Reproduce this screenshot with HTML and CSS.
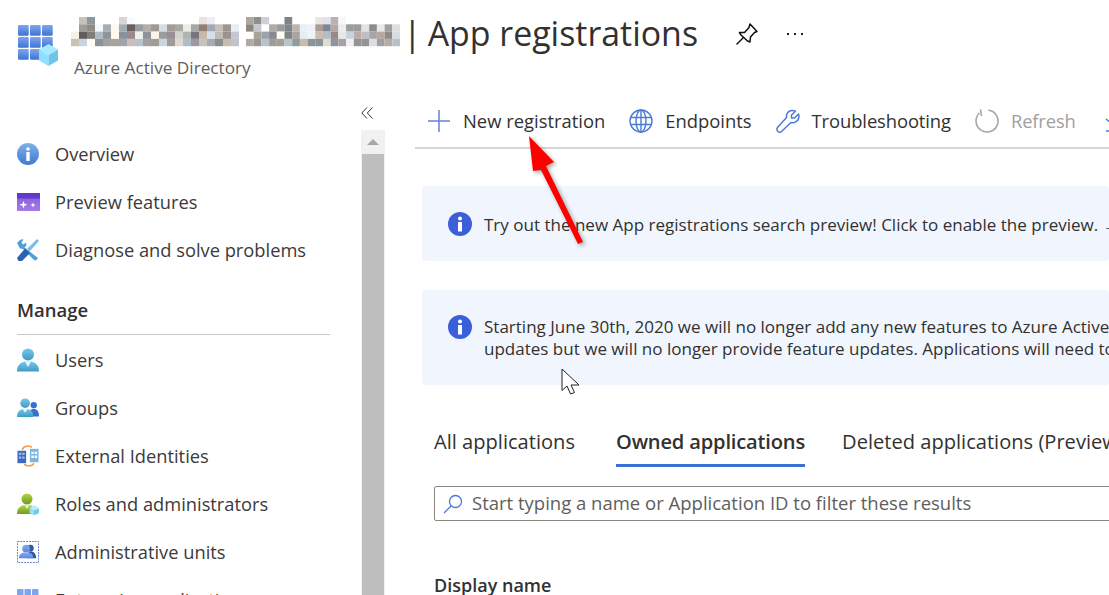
FILE: index.html
```html
<!DOCTYPE html>
<html lang="en">
<head>
<meta charset="utf-8">
<title>App registrations</title>
<link rel="stylesheet" href="styles.css">
</head>
<body>
<svg class="defs" aria-hidden="true">
  <defs>
    <linearGradient id="gridBlue" x1="0" y1="0" x2="0" y2="1"><stop offset="0" stop-color="#7ea6ef"/><stop offset="1" stop-color="#3f74d2"/></linearGradient>
    <linearGradient id="infoBlue" x1="0" y1="0" x2="0" y2="1"><stop offset="0" stop-color="#7fb2ea"/><stop offset="1" stop-color="#3f7ad2"/></linearGradient>
    <linearGradient id="userBlue" x1="0" y1="0" x2="0" y2="1"><stop offset="0" stop-color="#74c9ef"/><stop offset="1" stop-color="#3f9ac6"/></linearGradient>
    <linearGradient id="userGreen" x1="0" y1="0" x2="0" y2="1"><stop offset="0" stop-color="#b4d63c"/><stop offset="1" stop-color="#6f9a2a"/></linearGradient>
    <linearGradient id="unitBlue" x1="0" y1="0" x2="0" y2="1"><stop offset="0" stop-color="#86aaf0"/><stop offset="1" stop-color="#5a88e0"/></linearGradient>
    <linearGradient id="previewPurple" x1="0" y1="0" x2="0" y2="1"><stop offset="0" stop-color="#8458d8"/><stop offset="1" stop-color="#a67ae6"/></linearGradient>
  </defs>
</svg>
<div class="page">
  <header class="header">
    <svg class="app-logo" viewBox="0 0 42 42" width="42" height="42">
      <g fill="url(#gridBlue)">
        <rect x="0" y="0" width="10.7" height="10.7" rx="1.2"/><rect x="12" y="0" width="10.7" height="10.7" rx="1.2"/><rect x="24" y="0" width="10.7" height="10.7" rx="1.2"/>
        <rect x="0" y="12" width="10.7" height="10.7" rx="1.2"/><rect x="12" y="12" width="10.7" height="10.7" rx="1.2"/><rect x="24" y="12" width="10.7" height="10.7" rx="1.2"/>
        <rect x="0" y="24" width="10.7" height="10.7" rx="1.2"/><rect x="12" y="24" width="10.7" height="10.7" rx="1.2"/>
      </g>
      <path fill="#a9e9ff" d="M30.5 19 40 24.5 30.5 30 21 24.5z"/>
      <path fill="#8fe0ff" d="M21 24.5 30.5 30V41L21 35.500z"/>
      <path fill="#6ec6e6" d="M40 24.500V35.500L30.500 41V30z"/>
    </svg>
    <div class="title-block">
      <h1 class="title">
        <svg class="mosaic" viewBox="0 0 329 30" width="329" height="30" preserveAspectRatio="none" role="img" aria-label="Blurred tenant name">
          <g transform="scale(8 7.3)">
            <rect x="1" y="0" width="1" height="1" fill="#c9c0b6"/><rect x="2" y="0" width="1" height="1" fill="#8a979f"/><rect x="6" y="0" width="1" height="1" fill="#d8d4d4"/><rect x="7" y="0" width="1" height="1" fill="#f7fbfe"/><rect x="16" y="0" width="1" height="1" fill="#e8e3e0"/><rect x="17" y="0" width="1" height="1" fill="#eceef4"/>
            <rect x="1" y="1" width="1" height="1" fill="#a09c98"/><rect x="2" y="1" width="1" height="1" fill="#8f8d8a"/><rect x="3" y="1" width="1" height="1" fill="#f6f8fb"/><rect x="4" y="1" width="1" height="1" fill="#a6aeb1"/><rect x="5" y="1" width="1" height="1" fill="#fdf8f0"/><rect x="6" y="1" width="1" height="1" fill="#a0acb4"/><rect x="7" y="1" width="1" height="1" fill="#6b5f60"/><rect x="8" y="1" width="1" height="1" fill="#9a9da0"/><rect x="9" y="1" width="1" height="1" fill="#b6aea8"/><rect x="10" y="1" width="1" height="1" fill="#9d9b98"/><rect x="11" y="1" width="1" height="1" fill="#d5dde2"/><rect x="12" y="1" width="1" height="1" fill="#a09c98"/><rect x="13" y="1" width="1" height="1" fill="#a8a8a6"/><rect x="14" y="1" width="1" height="1" fill="#eeebe3"/><rect x="15" y="1" width="1" height="1" fill="#a8a8a6"/><rect x="16" y="1" width="1" height="1" fill="#917f76"/><rect x="17" y="1" width="1" height="1" fill="#a1aab6"/><rect x="18" y="1" width="1" height="1" fill="#c5c1b8"/><rect x="19" y="1" width="1" height="1" fill="#9a9792"/><rect x="20" y="1" width="1" height="1" fill="#e8eef2"/>
            <rect x="0" y="2" width="1" height="1" fill="#f7f0e6"/><rect x="1" y="2" width="1" height="1" fill="#5f5c5e"/><rect x="2" y="2" width="1" height="1" fill="#807c78"/><rect x="3" y="2" width="1" height="1" fill="#b0bac2"/><rect x="4" y="2" width="1" height="1" fill="#8d949a"/><rect x="5" y="2" width="1" height="1" fill="#fff9f0"/><rect x="6" y="2" width="1" height="1" fill="#8692a0"/><rect x="7" y="2" width="1" height="1" fill="#9a8a8a"/><rect x="8" y="2" width="1" height="1" fill="#eef2ec"/><rect x="9" y="2" width="1" height="1" fill="#8c949c"/><rect x="10" y="2" width="1" height="1" fill="#fdf3e6"/><rect x="11" y="2" width="1" height="1" fill="#9a9da0"/><rect x="12" y="2" width="1" height="1" fill="#9c8e96"/><rect x="13" y="2" width="1" height="1" fill="#d4d4cc"/><rect x="14" y="2" width="1" height="1" fill="#b0b4b4"/><rect x="15" y="2" width="1" height="1" fill="#767880"/><rect x="16" y="2" width="1" height="1" fill="#c8b8aa"/><rect x="17" y="2" width="1" height="1" fill="#d8dfec"/><rect x="18" y="2" width="1" height="1" fill="#c0bcb4"/><rect x="19" y="2" width="1" height="1" fill="#9a9490"/><rect x="20" y="2" width="1" height="1" fill="#c4c8d4"/>
            <rect x="0" y="3" width="1" height="1" fill="#c8c0b4"/><rect x="1" y="3" width="1" height="1" fill="#c8d4e0"/><rect x="2" y="3" width="1" height="1" fill="#fffcf6"/><rect x="3" y="3" width="1" height="1" fill="#8e9298"/><rect x="4" y="3" width="1" height="1" fill="#a4a09c"/><rect x="5" y="3" width="1" height="1" fill="#a8a4a0"/><rect x="6" y="3" width="1" height="1" fill="#a0a4a8"/><rect x="7" y="3" width="1" height="1" fill="#c8c0bc"/><rect x="8" y="3" width="1" height="1" fill="#b8c4cc"/><rect x="9" y="3" width="1" height="1" fill="#a4a09c"/><rect x="10" y="3" width="1" height="1" fill="#a09c98"/><rect x="11" y="3" width="1" height="1" fill="#ccd4dc"/><rect x="12" y="3" width="1" height="1" fill="#9c9c98"/><rect x="13" y="3" width="1" height="1" fill="#e0d8cc"/><rect x="14" y="3" width="1" height="1" fill="#b0bcc8"/><rect x="15" y="3" width="1" height="1" fill="#a098a0"/><rect x="16" y="3" width="1" height="1" fill="#c4c4b8"/><rect x="17" y="3" width="1" height="1" fill="#a8acb0"/><rect x="18" y="3" width="1" height="1" fill="#8c8c94"/><rect x="19" y="3" width="1" height="1" fill="#c8bcb0"/><rect x="20" y="3" width="1" height="1" fill="#c0c4cc"/>
          </g>
          <g transform="translate(175 0) scale(7.7 7.3)">
            <rect x="0" y="0" width="1" height="1" fill="#b0a69c"/><rect x="1" y="0" width="1" height="1" fill="#8e8e8c"/><rect x="2" y="0" width="1" height="1" fill="#ccd0d4"/><rect x="5" y="0" width="1" height="1" fill="#7e8486"/><rect x="9" y="0" width="1" height="1" fill="#ece4df"/><rect x="10" y="0" width="1" height="1" fill="#e0e2ea"/><rect x="11" y="0" width="1" height="1" fill="#bcb0b0"/><rect x="12" y="0" width="1" height="1" fill="#f6f8fc"/>
            <rect x="0" y="1" width="1" height="1" fill="#8c8680"/><rect x="1" y="1" width="1" height="1" fill="#c4c8cc"/><rect x="3" y="1" width="1" height="1" fill="#b0aaa4"/><rect x="4" y="1" width="1" height="1" fill="#9c9c9c"/><rect x="5" y="1" width="1" height="1" fill="#808484"/><rect x="6" y="1" width="1" height="1" fill="#bcb4ac"/><rect x="7" y="1" width="1" height="1" fill="#e8f0f8"/><rect x="8" y="1" width="1" height="1" fill="#eef2f6"/><rect x="9" y="1" width="1" height="1" fill="#a89c94"/><rect x="10" y="1" width="1" height="1" fill="#7e8694"/><rect x="11" y="1" width="1" height="1" fill="#b4a8a8"/><rect x="12" y="1" width="1" height="1" fill="#ecece8"/><rect x="13" y="1" width="1" height="1" fill="#9c9c9c"/><rect x="14" y="1" width="1" height="1" fill="#9c9c9c"/><rect x="15" y="1" width="1" height="1" fill="#e8e2de"/><rect x="16" y="1" width="1" height="1" fill="#8c8c90"/><rect x="17" y="1" width="1" height="1" fill="#e8e8e4"/><rect x="18" y="1" width="1" height="1" fill="#a0a0a0"/><rect x="19" y="1" width="1" height="1" fill="#dce0e4"/>
            <rect x="1" y="2" width="1" height="1" fill="#a8a49c"/><rect x="2" y="2" width="1" height="1" fill="#9aa4b0"/><rect x="3" y="2" width="1" height="1" fill="#8a8a8c"/><rect x="4" y="2" width="1" height="1" fill="#fffdf6"/><rect x="5" y="2" width="1" height="1" fill="#808484"/><rect x="6" y="2" width="1" height="1" fill="#aca49c"/><rect x="7" y="2" width="1" height="1" fill="#e4eef6"/><rect x="8" y="2" width="1" height="1" fill="#f0f4f6"/><rect x="9" y="2" width="1" height="1" fill="#cabcb0"/><rect x="10" y="2" width="1" height="1" fill="#b4bcc8"/><rect x="11" y="2" width="1" height="1" fill="#988888"/><rect x="12" y="2" width="1" height="1" fill="#e8e8e8"/><rect x="13" y="2" width="1" height="1" fill="#c8d4dc"/><rect x="14" y="2" width="1" height="1" fill="#b8b0a8"/><rect x="15" y="2" width="1" height="1" fill="#c0bcc4"/><rect x="16" y="2" width="1" height="1" fill="#a8a4ac"/><rect x="17" y="2" width="1" height="1" fill="#b8a8a0"/><rect x="18" y="2" width="1" height="1" fill="#8c8c8c"/><rect x="19" y="2" width="1" height="1" fill="#d8dce0"/>
            <rect x="0" y="3" width="1" height="1" fill="#b0aaa4"/><rect x="1" y="3" width="1" height="1" fill="#9a9894"/><rect x="2" y="3" width="1" height="1" fill="#b8c4cc"/><rect x="3" y="3" width="1" height="1" fill="#a09c98"/><rect x="4" y="3" width="1" height="1" fill="#a4a098"/><rect x="5" y="3" width="1" height="1" fill="#b8c4cc"/><rect x="6" y="3" width="1" height="1" fill="#909ca0"/><rect x="7" y="3" width="1" height="1" fill="#c8bcb0"/><rect x="8" y="3" width="1" height="1" fill="#8c9498"/><rect x="9" y="3" width="1" height="1" fill="#8c9498"/><rect x="10" y="3" width="1" height="1" fill="#e0dcd0"/><rect x="11" y="3" width="1" height="1" fill="#8c94a0"/><rect x="12" y="3" width="1" height="1" fill="#a8a0a4"/><rect x="13" y="3" width="1" height="1" fill="#f0f0f0"/><rect x="14" y="3" width="1" height="1" fill="#949494"/><rect x="15" y="3" width="1" height="1" fill="#949494"/><rect x="16" y="3" width="1" height="1" fill="#e0dcdc"/><rect x="17" y="3" width="1" height="1" fill="#9ca0a8"/><rect x="18" y="3" width="1" height="1" fill="#b8aca4"/><rect x="19" y="3" width="1" height="1" fill="#b8c0c8"/>
          </g>
        </svg>
        <span class="title-text"><span class="title-bar">|</span><span>App registrations</span></span>
      </h1>
      <p class="subtitle">Azure Active Directory</p>
    </div>
    <button class="pin" aria-label="Pin">
      <svg viewBox="0 0 22 24" width="22" height="24" fill="none" stroke="#111" stroke-width="1.5" stroke-linejoin="round">
        <path d="M14 2 21 9.500 18.500 10.500 14.500 15 14 20 11.500 19 5 13 3.500 10.500 8.500 10.500 13 5.500z"/>
        <path d="M7.500 15.500 1 22" stroke-linecap="round"/>
      </svg>
    </button>
    <div class="more" aria-label="More"><i></i><i></i><i></i></div>
  </header>

  <div class="blade">
    <aside class="sidebar">
      <div class="collapse-row">
        <svg viewBox="0 0 12 12" width="12" height="12" fill="none" stroke="#333" stroke-width="1"><path d="M6 .5 .8 6 6 11.500M11.500 .5 6.300 6 11.500 11.500"/></svg>
      </div>
      <div class="side-body">
        <nav class="menu">
          <a class="item">
            <svg class="ic" viewBox="0 0 22 22"><circle cx="11" cy="11" r="11" fill="url(#infoBlue)"/><circle cx="11" cy="6" r="1.800" fill="#fff"/><rect x="9.300" y="9" width="3.400" height="9" fill="#fff"/></svg>
            <span>Overview</span>
          </a>
          <a class="item">
            <svg class="ic ic-wide" viewBox="0 0 23 18"><rect width="23" height="18" fill="url(#previewPurple)"/><rect width="23" height="5.500" fill="#6238d0"/><path fill="#fff" d="M6.500 8 7.500 10.800 10.500 11.800 7.500 12.800 6.500 15.500 5.500 12.800 2.500 11.800 5.500 10.800zM16 9.500 16.700 11.300 18.500 12 16.700 12.700 16 14.500 15.300 12.700 13.500 12 15.300 11.300z"/></svg>
            <span>Preview features</span>
          </a>
          <a class="item">
            <svg class="ic" viewBox="0 0 22 22">
              <path d="M0 4 3 1 6.500 0 4.500 3.500 6 5.500 9.500 3.500 9 7 7.500 8.500 21 19 19 21.500 17 21 6 10 3 9.500z" fill="#4f9fdc"/>
              <path d="M20 0 22 2 12.500 12.500 10 10z" fill="#78bdea"/>
              <path d="M8 9.500 13 14 5 22 1.500 22 0 19z" fill="#2c62ad"/>
            </svg>
            <span>Diagnose and solve problems</span>
          </a>
          <div class="section">Manage</div>
          <a class="item">
            <svg class="ic ic-tall" viewBox="0 0 22 24"><circle cx="11" cy="6.500" r="6" fill="url(#userBlue)"/><path fill="url(#userBlue)" d="M0 23.500C0 17 3 15 8 13.500H14C19 15 22 17 22 23.500z"/><path fill="#eaf7fd" d="M8 13.500H14L11 19z"/></svg>
            <span>Users</span>
          </a>
          <a class="item">
            <svg class="ic" viewBox="0 0 23 20"><circle cx="17.500" cy="7" r="3.300" fill="#3a6fd0"/><path fill="#3a6fd0" d="M11.500 19C11.500 13 14 11 17.500 11S23 13 23 19z"/><circle cx="8.500" cy="5" r="5" fill="url(#userBlue)"/><path fill="url(#userBlue)" d="M0 19.500C0 14 2.500 12 6 11H11C15 12 17 14 17 19.500z"/><path fill="#eaf7fd" d="M6 11H11L8.500 15z"/></svg>
            <span>Groups</span>
          </a>
          <a class="item">
            <svg class="ic" viewBox="0 0 22 23">
              <rect y="6" width="9" height="13" fill="#3a68c4"/><rect x="13" y="4" width="9" height="14" fill="#7fb4e0"/>
              <path fill="#9dbbe8" d="M1.500 8h2.500v2.500h-2.500zM5 8h2.500v2.500h-2.500zM1.500 12h2.500v2.500h-2.500zM5 12h2.500v2.500h-2.500z"/>
              <path fill="#fff" d="M14.500 7h2.500v2.500h-2.500zM18 7h2.500v2.500h-2.500zM14.500 11h2.500v2.500h-2.500zM18 11h2.500v2.500h-2.500z"/>
              <path fill="none" stroke="#f0973a" stroke-width="1.500" d="M5 5C6 1 12 0 15 2.500M17 19C16 22 10 23 7 20"/>
            </svg>
            <span>External Identities</span>
          </a>
          <a class="item">
            <svg class="ic" viewBox="0 0 22 22"><circle cx="10" cy="6" r="5.500" fill="url(#userGreen)"/><path fill="url(#userGreen)" d="M0 21C0 15 3 13 7 12H13C17 13 20 15 20 21z"/><path fill="#eef6d4" d="M7.500 12H12.500L10 16z"/><path fill="#b6ecff" d="M17 12 22 15 17 18 12.500 15z"/><path fill="#94e0f8" d="M12.500 15 17 18V22.500L12.500 20z"/><path fill="#74cbe8" d="M22 15V20L17 22.500V18z"/></svg>
            <span>Roles and administrators</span>
          </a>
          <a class="item">
            <svg class="ic" viewBox="0 0 23 23"><rect x=".5" y=".5" width="22" height="22" fill="none" stroke="#5a7cc8" stroke-dasharray="2 1"/><circle cx="14" cy="7.500" r="3.500" fill="#33589f"/><path fill="#33589f" d="M10 18C10 13 12 11 15 11S20 14 20 18z"/><circle cx="9.500" cy="8" r="4" fill="url(#unitBlue)"/><path fill="url(#unitBlue)" d="M2 18C2 14 4 13 7 12H12C15 13 17 14 17 18z"/></svg>
            <span>Administrative units</span>
          </a>
          <a class="item">
            <svg class="ic" viewBox="0 0 22 22"><g fill="#7ea6ef"><rect y="0" width="6.500" height="6.500" rx="1"/><rect x="7.500" y="0" width="6.500" height="6.500" rx="1"/><rect x="15" y="0" width="6.500" height="6.500" rx="1"/></g></svg>
            <span>Enterprise applications</span>
          </a>
        </nav>
        <div class="scrollbar">
          <div class="scroll-btn"><span class="scroll-up"></span></div>
          <div class="scroll-thumb"></div>
        </div>
      </div>
    </aside>

    <main class="main">
      <div class="toolbar">
        <a class="tool">
          <svg viewBox="0 0 24 24" width="24" height="24" fill="none" stroke="#5d88d8" stroke-width="1.500"><path d="M12 1V23M1 12H23"/></svg>
          <span>New registration</span>
        </a>
        <a class="tool">
          <svg viewBox="0 0 24 24" width="24" height="24" fill="none" stroke="#4a7bd4" stroke-width="1.400"><circle cx="12" cy="12" r="11"/><ellipse cx="12" cy="12" rx="5" ry="11"/><path d="M12 1V23M1.500 8.500H22.500M1.500 15.500H22.500"/></svg>
          <span>Endpoints</span>
        </a>
        <a class="tool tool-tight">
          <svg viewBox="0 0 24 24" width="24" height="24" fill="none" stroke="#4a7bd4" stroke-width="1.500" stroke-linejoin="round"><path d="M16 1.500C12.500 1.500 10 4.500 10.500 8.500L1.500 18.500C.500 20 1 21.500 2 22.500S4.500 23.500 5.500 22.500L15 13.500C19 14.500 23 11.500 23 7.500 23 6.500 22.800 5.800 22.500 5L18.500 9H15.500V6L19.500 2.200C18.500 1.700 17.500 1.500 16 1.500Z"/></svg>
          <span>Troubleshooting</span>
        </a>
        <a class="tool tool-off">
          <svg viewBox="0 0 24 24" width="24" height="24" fill="none" stroke="#a6a6a6" stroke-width="1.600"><path d="M13.500 1.100A11 11 0 1 1 4.500 4"/><path d="M5.500 .5 6.500 7"/></svg>
          <span>Refresh</span>
        </a>
        <a class="tool tool-cut">
          <svg viewBox="0 0 24 24" width="24" height="24" fill="none" stroke="#4a7bd4" stroke-width="1.500"><path d="M1 10 11 18 21 10M1 22H23"/></svg>
        </a>
      </div>

      <div class="content">
        <div class="banner banner-short">
          <svg class="banner-ic" viewBox="0 0 24 24"><circle cx="12" cy="12" r="12" fill="#3b5fd9"/><circle cx="12" cy="6.500" r="2" fill="#fff"/><rect x="10" y="10" width="4" height="9.500" fill="#fff"/></svg>
          <p>Try out the new App registrations search preview! Click to enable the preview. →</p>
        </div>
        <div class="banner banner-tall">
          <svg class="banner-ic" viewBox="0 0 24 24"><circle cx="12" cy="12" r="12" fill="#3b5fd9"/><circle cx="12" cy="6.500" r="2" fill="#fff"/><rect x="10" y="10" width="4" height="9.500" fill="#fff"/></svg>
          <p>Starting June 30th, 2020 we will no longer add any new features to Azure Active<br>updates but we will no longer provide feature updates. Applications will need to</p>
        </div>
        <div class="tabs">
          <a class="tab">All applications</a>
          <a class="tab tab-on">Owned applications</a>
          <a class="tab">Deleted applications (Preview)</a>
        </div>
        <div class="search">
          <svg viewBox="0 0 20 20" width="20" height="20" fill="none" stroke="#4a7bd4" stroke-width="1.300"><circle cx="12.500" cy="7.500" r="6"/><path d="M8 12 1 19"/></svg>
          <span>Start typing a name or Application ID to filter these results</span>
        </div>
        <div class="col-head">Display name</div>
      </div>
    </main>
  </div>

  <svg class="red-arrow" viewBox="0 0 70 120" width="70" height="120">
    <path class="arrow-shape" fill="#fe0000" d="M4 1 29 27 21 31 58 107 53 109 16 35 8 36z"/>
  </svg>
  <svg class="cursor" viewBox="0 0 20 28" width="20" height="28">
    <path fill="#fff" stroke="#222" stroke-width="1" stroke-linejoin="round" d="M1 1V22.500L6 18 9.500 26 13.500 24.500 10 17H18z"/>
  </svg>
</div>
</body>
</html>
```

FILE: styles.css
```css
* { box-sizing: border-box; }
html, body { margin: 0; padding: 0; background: #fff; overflow: hidden; }
body { font-family: "Open Sans", "Noto Sans", sans-serif; color: #323130; }
.defs { display: block; width: 0; height: 0; }
a { color: inherit; text-decoration: none; }

.page { position: relative; width: 1109px; height: 595px; overflow: hidden; }

.header { display: flex; align-items: flex-start; height: 100px; }
.app-logo { flex: none; margin: 25px 0 0 18px; }
.title-block { margin-left: 11px; width: 654px; flex: none; }
.title { display: flex; align-items: flex-start; margin: 0; height: 55px; font-weight: 400; }
.mosaic { flex: none; margin-top: 17px; }
.title-text { font-size: 33.900px; line-height: 44px; margin: 11px 0 0 3px; white-space: nowrap; color: #323130; }
.title-bar { margin-right: 6px; }
.subtitle { margin: 1px 0 0 3px; font-size: 17.200px; line-height: 24px; color: #605e5c; }
.pin { flex: none; border: 0; padding: 0; margin: 22px 0 0 11px; background: none; display: block; }
.more { flex: none; display: flex; gap: 5px; margin: 33px 0 0 29px; }
.more i { display: block; width: 2px; height: 2px; background: #222; }

.blade { display: flex; height: 495px; }
.sidebar { flex: none; width: 415px; display: flex; flex-direction: column; }
.collapse-row { height: 30px; padding: 7px 0 0 361px; }
.collapse-row svg { display: block; }
.side-body { display: flex; flex: 1; min-height: 0; }
.menu { width: 361px; flex: none; padding: 0 31px 0 17px; overflow: hidden; }
.item { display: flex; align-items: center; height: 48px; font-size: 18.300px; white-space: nowrap; color: #3b3a39; }
.item span { padding-bottom: 2px; }
.ic { width: 22px; height: 22px; flex: none; margin-right: 16px; display: block; }
.ic-wide { width: 23px; height: 18px; margin-right: 15px; }
.ic-tall { height: 24px; }
.section { height: 37px; margin-top: 24px; margin-bottom: 1px; font-size: 18.500px; line-height: 24px; font-weight: 600; color: #323130; border-bottom: 1px solid #c8c8c8; }
.scrollbar { width: 24px; flex: none; background: #f1f1f1; padding: 0 1px; display: flex; flex-direction: column; }
.scroll-btn { height: 24px; display: flex; align-items: center; justify-content: center; }
.scroll-up { width: 0; height: 0; border-left: 6px solid transparent; border-right: 6px solid transparent; border-bottom: 6px solid #a8a8a8; }
.scroll-thumb { flex: 1; background: #bebebe; }

.main { flex: 1; min-width: 0; }
.toolbar { display: flex; align-items: center; gap: 24px; height: 49px; padding: 0 0 6px 12px; border-bottom: 2px solid #d6d6d6; white-space: nowrap; overflow: hidden; }
.tool { display: flex; align-items: center; gap: 12px; font-size: 18.400px; flex: none; color: #323130; }
.tool svg { display: block; flex: none; }
.tool-tight { letter-spacing: -.1px; }
.tool-off { color: #a0a0a0; letter-spacing: -.15px; }
.tool-cut { margin-left: 5px; }
.content { padding: 37px 0 0 7px; }
.banner { display: flex; background: #f1f6fe; border-radius: 3px; padding-left: 26px; white-space: nowrap; overflow: hidden; }
.banner p { margin: 0; font-size: 17.030px; line-height: 22px; color: #323130; }
.banner-ic { width: 24px; height: 24px; flex: none; margin-right: 12px; }
.banner-short { height: 75px; align-items: center; }
.banner-short p { padding-top: 2px; }
.banner-tall { height: 95px; margin-top: 29px; padding-top: 25px; }
.banner-tall p { padding-top: 1px; }
.tabs { display: flex; align-items: flex-start; gap: 37px; margin: 40px 0 0 12px; white-space: nowrap; height: 42px; }
.tab { font-size: 20.100px; line-height: 34px; flex: none; }
.tab-on { font-weight: 600; letter-spacing: -.17px; border-bottom: 3px solid #3a6fd0; height: 42px; margin-left: 4px; }
.search { display: flex; align-items: center; gap: 9px; height: 35px; margin: 19px 0 0 12px; width: 900px; padding-left: 8px; border: 1px solid #8a8886; border-radius: 2px; font-size: 18.500px; color: #605e5c; white-space: nowrap; }
.search span { padding-bottom: 2px; }
.search svg { flex: none; display: block; }
.col-head { margin: 51px 0 0 12px; font-size: 18px; font-weight: 600; line-height: 26px; color: #323130; }

.red-arrow { position: absolute; left: 525px; top: 135px; overflow: visible; }
.arrow-shape { filter: drop-shadow(2px 2px 2px rgba(0,0,0,.35)); }
.cursor { position: absolute; left: 561px; top: 368px; }
```
